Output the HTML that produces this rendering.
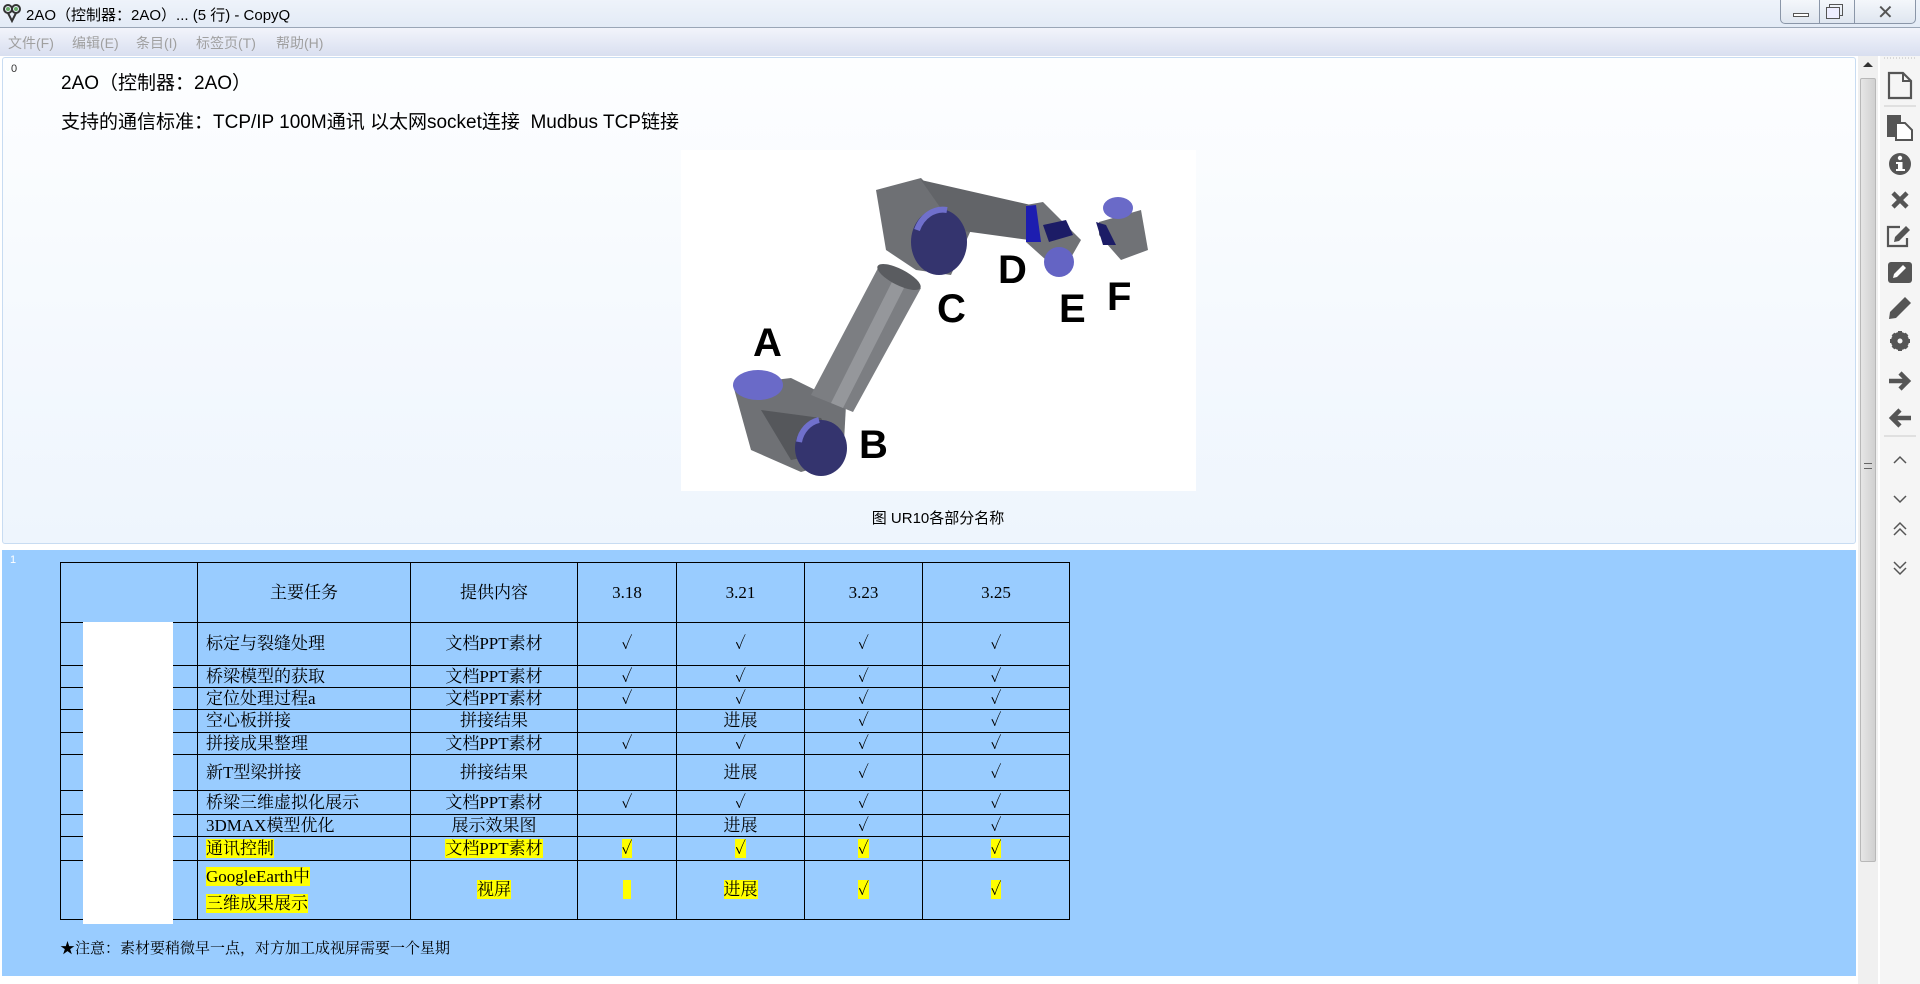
<!DOCTYPE html>
<html><head><meta charset="utf-8">
<style>
*{margin:0;padding:0;box-sizing:border-box}
body{width:1920px;height:984px;overflow:hidden;background:#fff;font-family:"Liberation Sans","Noto Sans CJK SC",sans-serif;position:relative}
.title{position:absolute;left:0;top:0;width:1920px;height:28px;background:linear-gradient(#eef3fa,#e3ebf6);border-bottom:1px solid #9aa6b6}
.title span{position:absolute;left:26px;top:4px;font-size:15px;color:#000}
.menu{position:absolute;left:0;top:28px;width:1920px;height:28px;background:linear-gradient(#f2f4fb,#d9dff0)}
.menu span{position:absolute;top:5px;font-size:14px;color:#a0a0a0}
.item0{position:absolute;left:2px;top:57px;width:1854px;height:487px;background:linear-gradient(#fdfeff,#eef5fd);border:1px solid #c8dcf2;border-radius:3px}
.item1{position:absolute;left:2px;top:550px;width:1854px;height:426px;background:#99ccff}
.idx{position:absolute;font-size:11px;color:#333}
.sb{position:absolute;left:1858px;top:56px;width:20px;height:928px;background:#f0f0f0}
.thumb{position:absolute;left:1860px;top:78px;width:16px;height:784px;background:linear-gradient(90deg,#e6e6e6,#d0d0d0);border:1px solid #b8b8b8;border-radius:2px}
.tb{position:absolute;left:1880px;top:56px;width:40px;height:928px;background:#f5f5f5}
table{position:absolute;left:60px;top:562px;border-collapse:collapse;font-family:"Liberation Serif","Noto Serif CJK SC",serif;font-size:17px;line-height:18px;color:#000;table-layout:fixed}
td{border:1px solid #000;padding:0;text-align:center;white-space:nowrap;overflow:hidden}
td.l{text-align:left;padding-left:8px}
.y{background:#ffff00}
</style></head><body>
<div class="title">
<svg style="position:absolute;left:2px;top:3px" width="20" height="20" viewBox="0 0 20 20"><circle cx="6" cy="6" r="4" fill="none" stroke="#333" stroke-width="2"/><circle cx="14" cy="6" r="4" fill="none" stroke="#333" stroke-width="2"/><path d="M6 10 L10 18 L14 10" fill="none" stroke="#333" stroke-width="2"/><circle cx="6" cy="6" r="2" fill="#6a6"/><circle cx="14" cy="6" r="2" fill="#6a6"/></svg>
<span>2AO（控制器：2AO）... (5 行) - CopyQ</span>
<div style="position:absolute;left:1780px;top:0;width:136px;height:24px;border:1px solid #8a96a8;border-top:none;border-radius:0 0 5px 5px;background:linear-gradient(#f4f7fb,#dfe6f0)">
<div style="position:absolute;left:12px;top:13px;width:16px;height:4px;border:1px solid #555;background:#fff"></div>
<div style="position:absolute;left:38px;top:0;width:1px;height:24px;background:#8a96a8"></div>
<div style="position:absolute;left:48px;top:4px;width:14px;height:12px;border:1px solid #555"></div>
<div style="position:absolute;left:45px;top:7px;width:14px;height:12px;border:1px solid #555;background:#eef"></div>
<div style="position:absolute;left:73px;top:0;width:1px;height:24px;background:#8a96a8"></div>
<span style="left:96px;top:0;font-size:20px;color:#555">✕</span>
</div>
</div>
<div class="menu">
<span style="left:8px">文件(F)</span><span style="left:72px">编辑(E)</span><span style="left:136px">条目(I)</span><span style="left:196px">标签页(T)</span><span style="left:276px">帮助(H)</span>
</div>

<div class="item0">
<div class="idx" style="left:8px;top:5px">0</div>
<div style="position:absolute;left:58px;top:10px;font-size:19px">2AO（控制器：2AO）</div>
<div style="position:absolute;left:58px;top:49px;font-size:19px">支持的通信标准：TCP/IP 100M通讯 以太网socket连接&nbsp; Mudbus TCP链接</div>
<svg style="position:absolute;left:678px;top:92px" width="515" height="341" viewBox="0 0 515 341">
<rect width="515" height="341" fill="#fff"/>
<g stroke="none">
<path d="M52 235 L110 228 L165 255 L162 310 L120 322 L70 300 Z" fill="#6f7175"/>
<path d="M80 260 L140 268 L160 300 L110 310 Z" fill="#55575b"/>
<ellipse cx="77" cy="235" rx="25" ry="15" fill="#6a6ac8"/>
<ellipse cx="140" cy="298" rx="26" ry="28" fill="#34346e"/>
<path d="M118 292 a26 28 0 0 1 20 -22" stroke="#7070cc" stroke-width="6" fill="none"/>
<path d="M130 245 L197 118 L240 138 L172 262 Z" fill="#7c7e82"/>
<path d="M150 253 L213 128 L225 134 L162 258Z" fill="#95979b"/>
<ellipse cx="218" cy="127" rx="24" ry="8" transform="rotate(27 218 127)" fill="#5a5c60"/>
<path d="M195 40 L240 28 L290 80 L270 125 L235 120 L205 100 Z" fill="#6e7074"/>
<path d="M240 30 L350 55 L348 90 L275 80 Z" fill="#626468"/>
<ellipse cx="258" cy="92" rx="28" ry="33" fill="#34346e"/>
<path d="M236 80 a28 33 0 0 1 30 -20" stroke="#7070cc" stroke-width="6" fill="none"/>
<path d="M345 55 L362 52 L400 90 L380 125 L365 110 L345 92 Z" fill="#707276"/>
<path d="M345 56 L355 55 L360 92 L345 92Z" fill="#1d1db0"/>
<path d="M362 75 L385 70 L392 85 L368 92Z" fill="#1c1c66"/>
<ellipse cx="378" cy="112" rx="15" ry="15" fill="#6464c4"/>
<path d="M418 72 L460 60 L467 100 L440 110 L418 85 Z" fill="#707276"/>
<ellipse cx="437" cy="58" rx="15" ry="11" fill="#6a6ac8"/>
<path d="M415 72 L425 75 L435 95 L422 95Z" fill="#1c1c66"/>
</g>
<g font-family="Liberation Sans,sans-serif" font-weight="bold" font-size="40" fill="#000">
<text x="72" y="206">A</text><text x="178" y="308">B</text><text x="256" y="172">C</text><text x="317" y="133">D</text><text x="378" y="172">E</text><text x="426" y="160">F</text>
</g>
</svg>
<div style="position:absolute;left:0;width:1854px;top:449px;text-align:center;font-size:15px;padding-left:16px">图 UR10各部分名称</div>
</div>

<div class="item1">
<div class="idx" style="left:8px;top:4px;color:#fff">1</div>
<div style="position:absolute;left:58px;top:387px;font-size:15px;font-family:'Liberation Serif','Noto Serif CJK SC',serif">★注意：素材要稍微早一点，对方加工成视屏需要一个星期</div>
</div>
<table>
<colgroup><col style="width:137px"><col style="width:213px"><col style="width:167px"><col style="width:99px"><col style="width:128px"><col style="width:118px"><col style="width:147px"></colgroup>
<tr style="height:60px"><td></td><td>主要任务</td><td>提供内容</td><td>3.18</td><td>3.21</td><td>3.23</td><td>3.25</td></tr>
<tr style="height:43px"><td></td><td class="l">标定与裂缝处理</td><td>文档PPT素材</td><td>✓</td><td>✓</td><td>✓</td><td>✓</td></tr>
<tr style="height:22px"><td></td><td class="l">桥梁模型的获取</td><td>文档PPT素材</td><td>✓</td><td>✓</td><td>✓</td><td>✓</td></tr>
<tr style="height:22px"><td></td><td class="l">定位处理过程a</td><td>文档PPT素材</td><td>✓</td><td>✓</td><td>✓</td><td>✓</td></tr>
<tr style="height:23px"><td></td><td class="l">空心板拼接</td><td>拼接结果</td><td></td><td>进展</td><td>✓</td><td>✓</td></tr>
<tr style="height:22px"><td></td><td class="l">拼接成果整理</td><td>文档PPT素材</td><td>✓</td><td>✓</td><td>✓</td><td>✓</td></tr>
<tr style="height:36px"><td></td><td class="l">新T型梁拼接</td><td>拼接结果</td><td></td><td>进展</td><td>✓</td><td>✓</td></tr>
<tr style="height:24px"><td></td><td class="l">桥梁三维虚拟化展示</td><td>文档PPT素材</td><td>✓</td><td>✓</td><td>✓</td><td>✓</td></tr>
<tr style="height:22px"><td></td><td class="l">3DMAX模型优化</td><td>展示效果图</td><td></td><td>进展</td><td>✓</td><td>✓</td></tr>
<tr style="height:24px"><td></td><td class="l"><span class="y">通讯控制</span></td><td><span class="y">文档PPT素材</span></td><td><span class="y">✓</span></td><td><span class="y">✓</span></td><td><span class="y">✓</span></td><td><span class="y">✓</span></td></tr>
<tr style="height:59px"><td></td><td class="l" style="line-height:27px;vertical-align:top;padding-top:2px"><span class="y">GoogleEarth中</span><br><span class="y">三维成果展示</span></td><td><span class="y">视屏</span></td><td><span class="y">&nbsp;&nbsp;</span></td><td><span class="y">进展</span></td><td><span class="y">✓</span></td><td><span class="y">✓</span></td></tr>
</table>
<div style="position:absolute;left:83px;top:622px;width:90px;height:302px;background:#fff"></div>

<div class="sb"><div style="position:absolute;left:5px;top:6px;border:5px solid transparent;border-bottom:5px solid #333;border-top:none"></div></div>
<div class="thumb"><div style="position:absolute;left:3px;top:384px;width:8px;height:6px;border-top:1px solid #666;border-bottom:1px solid #666"></div></div>
<div class="tb">
<svg width="40" height="560" viewBox="0 0 40 560" fill="#555" stroke="#555">
<line x1="4" y1="2" x2="36" y2="2" stroke="#bbb" stroke-dasharray="1 2"/>
<g transform="translate(0,16)"><path d="M9 1 H23 L31 9 V26 H9 Z" fill="none" stroke-width="2.2"/><path d="M23 1 V9 H31" fill="none" stroke-width="2"/></g>
<line x1="4" y1="50" x2="36" y2="50" stroke="#ccc"/>
<g transform="translate(0,58)"><rect x="7" y="1" width="14" height="22" stroke="none"/><path d="M16 9 H25 L32 16 V26 H16 Z" fill="#fff" stroke-width="2"/></g>
<g transform="translate(20,108)"><circle r="11" stroke="none"/><rect x="-2" y="-2" width="4.5" height="8" fill="#fff" stroke="none"/><rect x="-4" y="-2" width="4" height="2" fill="#fff" stroke="none"/><rect x="-4" y="5" width="9" height="2" fill="#fff" stroke="none"/><circle cy="-6" r="2.2" fill="#fff" stroke="none"/></g>
<path d="M13 137 L27 151 M27 137 L13 151" stroke-width="4.5"/>
<g transform="translate(0,168)"><path d="M20 3 H8 V22 H27 V14" fill="none" stroke-width="2.2"/><path d="M14 18 L15 13 L26 2 L30 6 L19 17 Z" stroke="none"/></g>
<g transform="translate(0,205)"><rect x="8" y="1" width="24" height="21" rx="3" stroke="none"/><path d="M13 17 L14 13 L23 4 L26 7 L17 16 Z" fill="#fff" stroke="none"/></g>
<path d="M9 263 L10 256 L25 241 L31 247 L16 262 Z" stroke="none"/>
<g transform="translate(20,285)"><circle r="6.5" fill="none" stroke-width="5"/><g stroke-width="4"><line y1="-10" y2="10"/><line x1="-10" x2="10"/><line x1="-7" y1="-7" x2="7" y2="7"/><line x1="-7" y1="7" x2="7" y2="-7"/></g><circle r="2.5" fill="#f5f5f5" stroke="none"/></g>
<path d="M9 325 H27 M20 317 L28 325 L20 333" fill="none" stroke-width="4.5"/>
<path d="M31 362 H13 M20 354 L12 362 L20 370" fill="none" stroke-width="4.5"/>
<line x1="4" y1="380" x2="36" y2="380" stroke="#ccc"/>
<path d="M14 407 L20 401 L26 407" fill="none" stroke-width="1.5"/>
<path d="M14 440 L20 446 L26 440" fill="none" stroke-width="1.5"/>
<path d="M14 473 L20 467 L26 473 M14 479 L20 473 L26 479" fill="none" stroke-width="1.5"/>
<path d="M14 506 L20 512 L26 506 M14 512 L20 518 L26 512" fill="none" stroke-width="1.5"/>
</svg>
</div>
</body></html>
